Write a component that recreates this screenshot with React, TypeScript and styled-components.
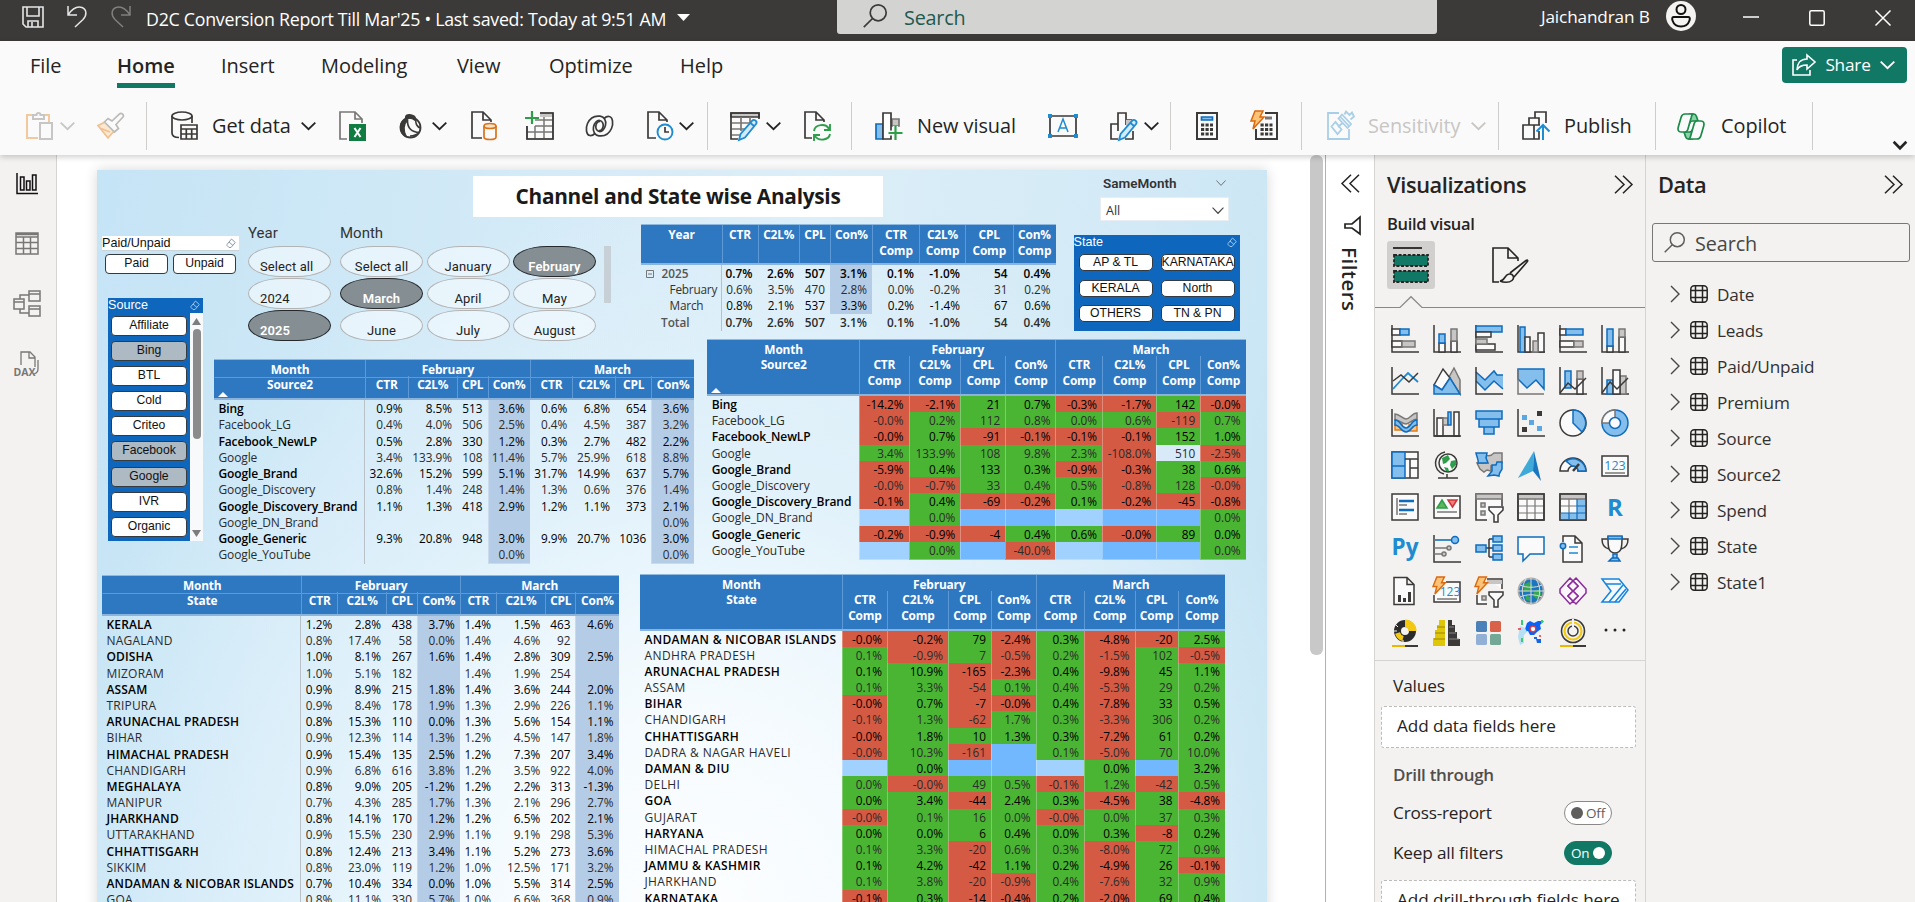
import React from "react";
import styled, { createGlobalStyle, css } from "styled-components";

const UI = '"Open Sans", "Noto Sans", sans-serif';
const DIN = 'Roboto, "Noto Sans", sans-serif';
const ARIAL = '"Liberation Sans", Arial, sans-serif';

const INK = "#3b3a39";
const BLUE = "#0f6cbd";
const SKY = "#83beec";
const GREY = "#797775";
const SILVER = "#c8c6c4";
const PAPER = "#fafafa";
const CYAN = "#1f8bd0";
const TEAL = "#117865";
const GREEN = "#2e9e4b";

const Global = createGlobalStyle`
  *, *::before, *::after { box-sizing: border-box; }
  html, body { margin: 0; padding: 0; }
  body { font-family: ${UI}; color: #252423; background: #fff; overflow: hidden; }
  svg { display: block; flex: none; overflow: visible; }
`;

/* ---------- shell ---------- */

const Shell = styled.div`
  width: 1915px;
  height: 902px;
  display: flex;
  flex-direction: column;
  overflow: hidden;
`;

const TitleBar = styled.header`
  height: 41px;
  flex: none;
  display: flex;
  align-items: flex-start;
  background: #3b3a38;
  color: #fff;
`;

const TitleIcon = styled.div<{ $ml: number; $mt: number; $dim?: boolean }>`
  margin: ${(p) => p.$mt}px 0 0 ${(p) => p.$ml}px;
  opacity: ${(p) => (p.$dim ? 0.4 : 1)};
`;

const DocName = styled.div`
  width: 531px;
  margin-left: 15px;
  padding-top: 6px;
  font-size: 17.8px;
  line-height: 27px;
  letter-spacing: -0.27px;
  white-space: nowrap;
`;

const TopSearch = styled.div`
  width: 600px;
  height: 34px;
  margin-left: 147px;
  padding: 0 0 0 26px;
  display: flex;
  align-items: flex-start;
  background: #d3d3d1;
  border-radius: 0 0 3px 3px;
  color: #1e5a4e;
  font-size: 19.8px;
  line-height: 35px;
  letter-spacing: -0.2px;
`;

const TopSearchText = styled.span`
  margin-left: 17px;
`;

const UserName = styled.div`
  width: 125px;
  margin-left: 104px;
  font-size: 17.2px;
  line-height: 34px;
  letter-spacing: -0.15px;
  white-space: nowrap;
`;

const Ribbon = styled.div`
  height: 114px;
  flex: none;
  position: relative;
  z-index: 2;
  background: ${PAPER};
  box-shadow: 0 2px 6px rgba(0, 0, 0, 0.2);
`;

const TabRow = styled.nav`
  height: 60px;
  padding: 6px 8px 0 30px;
  display: flex;
`;

const Tab = styled.div<{ $w: number; $active?: boolean }>`
  width: ${(p) => p.$w}px;
  font-size: 20px;
  line-height: 38px;
  letter-spacing: -0.05px;
  font-weight: ${(p) => (p.$active ? 600 : 400)};
`;

const TabLabel = styled.span<{ $active?: boolean }>`
  display: inline-block;
  height: 41px;
  border-bottom: ${(p) => (p.$active ? `5px solid ${TEAL}` : "0")};
`;

const ShareButton = styled.div`
  width: 125px;
  height: 36px;
  margin-left: auto;
  padding: 0 12px 0 10px;
  display: flex;
  align-items: center;
  justify-content: space-between;
  border-radius: 4px;
  background: ${TEAL};
  color: #fff;
  font-size: 17.2px;
  letter-spacing: -0.2px;
  line-height: 36px;
`;

const ToolRow = styled.div`
  height: 50px;
  display: flex;
  align-items: center;
`;

const Tool = styled.div<{ $ml: number; $w?: number }>`
  width: ${(p) => p.$w ?? 28}px;
  margin-left: ${(p) => p.$ml}px;
  flex: none;
  display: flex;
  align-items: center;
`;

const ToolLabel = styled.div<{ $ml: number; $w: number; $off?: boolean }>`
  width: ${(p) => p.$w}px;
  margin-left: ${(p) => p.$ml}px;
  flex: none;
  font-size: 19.9px;
  line-height: 52px;
  letter-spacing: -0.05px;
  white-space: nowrap;
  color: ${(p) => (p.$off ? "#c8c6c4" : "#252423")};
`;

const Divider = styled.div<{ $ml: number }>`
  width: 1px;
  height: 48px;
  margin-left: ${(p) => p.$ml}px;
  flex: none;
  background: #cfcdcb;
`;

const Collapse = styled.div`
  align-self: flex-end;
  margin: 0 8px 2px auto;
`;

const Workspace = styled.div`
  flex: 1;
  min-height: 0;
  display: flex;
`;

const Rail = styled.aside`
  width: 57px;
  flex: none;
  padding-top: 15px;
  display: flex;
  flex-direction: column;
  align-items: center;
  gap: 33px;
  padding-right: 2px;
  background: #f3f2f1;
  border-right: 1px solid #d6d4d2;
`;

const RailItem = styled.div`
  height: 27px;
  display: flex;
  align-items: center;
`;

const CanvasArea = styled.main`
  width: 1268px;
  flex: none;
  padding-left: 40px;
  display: flex;
  background: #fff;
`;

const PageScroll = styled.div`
  width: 13px;
  height: 500px;
  margin-left: 43px;
  border-radius: 6px;
  background: #c8c8c8;
`;

/* ---------- report page ---------- */

const Page = styled.section`
  width: 1170px;
  height: 760px;
  margin-top: 15px;
  flex: none;
  box-shadow: 0 0 12px rgba(0, 0, 0, 0.16);
  background:
    radial-gradient(ellipse 660px 740px at 600px 760px, #fdfeff 0%, #f3fafe 35%, rgba(226, 242, 251, 0.85) 62%, rgba(205, 232, 246, 0) 100%),
    linear-gradient(100deg, #c5e4f5 0%, #d3eaf7 32%, #dceef8 55%, #d3eaf6 80%, #c5e3f3 100%);
`;

const PageHead = styled.div`
  height: 54px;
  padding: 6px 0 0 376px;
  display: flex;
`;

const PageTitle = styled.h1`
  width: 410px;
  height: 41px;
  margin: 0;
  background: #fff;
  text-align: center;
  font-size: 20.8px;
  font-weight: 700;
  line-height: 40px;
  letter-spacing: -0.27px;
  white-space: nowrap;
  color: #1b1a19;
`;

const SameMonth = styled.div`
  width: 129px;
  margin-left: 217px;
`;

const SameMonthHead = styled.div`
  height: 21px;
  padding: 0 3px 7px 3px;
  display: flex;
  align-items: center;
  justify-content: space-between;
  font: 600 13.5px ${DIN};
  color: #333;
`;

const SameMonthBox = styled.div`
  height: 24px;
  padding: 2px 4px 0 5px;
  display: flex;
  align-items: center;
  justify-content: space-between;
  background: #fff;
  border: 1px solid #e9eef2;
  font-size: 12.5px;
  color: #333;
`;

const Upper = styled.div`
  height: 350px;
  display: flex;
`;

const SideColumn = styled.div`
  width: 117px;
  flex: none;
  padding: 12px 0 0 5px;
`;

const MainColumn = styled.div`
  flex: 1;
  min-width: 0;
`;

const FilterBand = styled.div`
  height: 115px;
  padding-left: 34px;
  display: flex;
  align-items: flex-start;
`;

const TableBand = styled.div`
  display: flex;
  align-items: flex-start;
`;

const Lower = styled.div`
  display: flex;
  align-items: flex-start;
  padding-left: 5px;
`;

const PaidSlicer = styled.div`
  width: 137px;
`;

const SlicerHead = styled.div<{ $blue?: boolean }>`
  height: 15px;
  padding-right: 3px;
  display: flex;
  align-items: center;
  justify-content: space-between;
  font: 12.6px/15px ${ARIAL};
  color: ${(p) => (p.$blue ? "#fff" : "#111")};
  background: ${(p) => (p.$blue ? "#0f67bd" : "#fff")};
  border-bottom: ${(p) => (p.$blue ? "0" : "1px solid #c9d3da")};
`;

const PaidButtons = styled.div`
  padding: 3px 3px 0;
  display: flex;
  gap: 5px;
`;

const Chip = styled.div<{ $h: number; $on?: boolean; $r?: number }>`
  height: ${(p) => p.$h}px;
  flex: 1;
  min-width: 0;
  border: 1px solid #333a40;
  border-radius: ${(p) => p.$r ?? 4}px;
  background: ${(p) => (p.$on ? "#adbac4" : "#fff")};
  font: 12.2px/${(p) => p.$h - 3}px ${ARIAL};
  color: #111;
  display: flex;
  justify-content: center;
  white-space: nowrap;
  overflow: hidden;
`;

const SourceSlicer = styled.div`
  width: 95px;
  height: 243px;
  margin: 24px 0 0 6px;
  background: #0f67bd;
`;

const SourceBody = styled.div`
  height: 228px;
  display: flex;
`;

const SourceList = styled.div`
  width: 82px;
  padding: 3px 3px 0;
  display: flex;
  flex-direction: column;
  gap: 5.1px;
  & > div { flex: none; }
`;

const SourceScroll = styled.div`
  width: 13px;
  padding: 5px 0 4px;
  display: flex;
  flex-direction: column;
  align-items: center;
  background: #f8f9fa;
`;

const Thumb = styled.div`
  width: 8px;
  height: 110px;
  margin: 4px 0 auto;
  border-radius: 4px;
  background: #8b8b8b;
`;

const TileSlicer = styled.div<{ $ml?: number; $w: number }>`
  width: ${(p) => p.$w}px;
  margin-left: ${(p) => p.$ml ?? 0}px;
  flex: none;
`;

const TileTitle = styled.div`
  height: 22px;
  font: 15px/18px ${DIN};
  color: #333;
`;

const TileGrid = styled.div<{ $n: number }>`
  display: grid;
  grid-template-columns: repeat(${(p) => p.$n}, 83px);
  grid-auto-rows: 31px;
  gap: 1px 3.5px;
`;

const Tile = styled.div<{ $on?: boolean; $left?: boolean }>`
  padding: 8px 0 0 ${(p) => (p.$left ? "11px" : "0")};
  border: 1px solid ${(p) => (p.$on ? "#25292c" : "#b3b3b3")};
  border-radius: 34px / 50%;
  background: ${(p) => (p.$on ? "#858e93" : "rgba(247, 252, 255, 0.6)")};
  color: ${(p) => (p.$on ? "#fff" : "#222")};
  font: ${(p) => (p.$on ? 600 : 400)} 13px/24px ${DIN};
  letter-spacing: 0.1px;
  text-align: ${(p) => (p.$left ? "left" : "center")};
  white-space: nowrap;
`;

const TileScroll = styled.div`
  width: 7px;
  height: 57px;
  margin: 22px 0 0 8px;
  flex: none;
  background: #c6d0d6;
`;

const StateSlicer = styled.div`
  width: 166px;
  height: 96px;
  margin: 11px 0 0 18px;
  background: #0f67bd;
`;

const StateGrid = styled.div`
  padding: 4px 5px 0;
  display: grid;
  grid-template-columns: 74px 74px;
  gap: 8.5px 8px;
`;

/* ---------- matrix visuals ---------- */

const Matrix = styled.div<{ $ml?: number; $mt?: number }>`
  margin: ${(p) => p.$mt ?? 0}px 0 0 ${(p) => p.$ml ?? 0}px;
  flex: none;
  font-size: 11.8px;
`;

const gridCols = css<{ $cols: number[] }>`
  display: grid;
  grid-template-columns: ${(p) => p.$cols.map((c) => `${c}px`).join(" ")};
`;

const HeadGrid = styled.div<{ $cols: number[]; $h: number; $grouped?: boolean }>`
  ${gridCols}
  height: ${(p) => p.$h}px;
  grid-template-rows: ${(p) => (p.$grouped ? "15.5px 1fr" : "1fr")};
  background: #2e78c2;
  border-top: 1px solid #8fb9df;
  border-bottom: 2px solid #8ab4dc;
  color: #fff;
  font-weight: 700;
  font-size: 11.9px;
  letter-spacing: -0.15px;
`;

const HeadTop = styled.div<{ $cols: number[] }>`
  ${gridCols}
  grid-column: 1 / -1;
`;

const HeadCell = styled.div<{ $span?: number; $line?: boolean; $under?: boolean }>`
  grid-column: span ${(p) => p.$span ?? 1};
  padding-top: 0.5px;
  display: flex;
  flex-direction: column;
  text-align: center;
  line-height: 16.3px;
  white-space: pre;
  border-left: 1px solid ${(p) => (p.$line ? "#5c99d6" : "transparent")};
  border-bottom: ${(p) => (p.$under ? "1px solid #5c99d6" : "0")};
`;

const SortMark = styled.div`
  width: 0;
  height: 0;
  margin: auto 0 1px 3px;
  border: 5px solid transparent;
  border-top-width: 0;
  border-bottom-color: #fff;
`;

const BodyRow = styled.div<{ $cols: number[]; $h: number; $even: boolean }>`
  ${gridCols}
  height: ${(p) => p.$h}px;
  line-height: ${(p) => p.$h + 0.8}px;
  color: ${(p) => (p.$even ? "#2b2b2b" : "#000")};
`;

const RowLabel = styled.div<{ $strong: boolean; $ls: number; $rule?: boolean }>`
  padding-left: 4.5px;
  font-size: 12px;
  font-weight: ${(p) => (p.$strong ? 600 : 400)};
  letter-spacing: ${(p) => p.$ls}px;
  white-space: nowrap;
  border-right: ${(p) => (p.$rule ? "1px solid #b9c0c6" : "0")};
`;

const Value = styled.div<{ $bg?: string; $bold?: boolean; $edge?: string }>`
  padding-right: 5px;
  text-align: right;
  white-space: nowrap;
  font-weight: ${(p) => (p.$bold ? 600 : 400)};
  background: ${(p) => p.$bg ?? "transparent"};
  border: 0 solid ${(p) => p.$edge ?? "transparent"};
  border-width: ${(p) => (p.$edge ? "0 0 1px 1px" : "0")};
`;

const YearLabel = styled.div<{ $indent: number; $strong?: boolean }>`
  padding-left: ${(p) => p.$indent}px;
  display: flex;
  align-items: center;
  gap: 8px;
  font-weight: ${(p) => (p.$strong ? 600 : 400)};
  font-size: 11.8px;
  letter-spacing: ${(p) => (p.$strong ? 0 : -0.2)}px;
  color: ${(p) => (p.$strong ? "#555" : "#333")};
  border-right: 1px solid #b9c0c6;
`;

type Row = [string, string];

const METRICS = ["CTR", "C2L%", "CPL", "Con%"];
const COMPS = METRICS.map((m) => `${m}\nComp`);

const sourceRows: Row[] = [
  ["Bing", "0.9%|8.5%|513|3.6%|0.6%|6.8%|654|3.6%"],
  ["Facebook_LG", "0.4%|4.0%|506|2.5%|0.4%|4.5%|387|3.2%"],
  ["Facebook_NewLP", "0.5%|2.8%|330|1.2%|0.3%|2.7%|482|2.2%"],
  ["Google", "3.4%|133.9%|108|11.4%|5.7%|25.9%|618|8.8%"],
  ["Google_Brand", "32.6%|15.2%|599|5.1%|31.7%|14.9%|637|5.7%"],
  ["Google_Discovery", "0.8%|1.4%|248|1.4%|1.3%|0.6%|376|1.4%"],
  ["Google_Discovery_Brand", "1.1%|1.3%|418|2.9%|1.2%|1.1%|373|2.1%"],
  ["Google_DN_Brand", "|||||||0.0%"],
  ["Google_Generic", "9.3%|20.8%|948|3.0%|9.9%|20.7%|1036|3.0%"],
  ["Google_YouTube", "|||0.0%||||0.0%"],
];

const sourceCompRows: Row[] = [
  ["Bing", "-14.2%|-2.1%|21|0.7%|-0.3%|-1.7%|142|-0.0%"],
  ["Facebook_LG", "-0.0%|0.2%|112|0.8%|0.0%|0.6%|-119|0.7%"],
  ["Facebook_NewLP", "-0.0%|0.7%|-91|-0.1%|-0.1%|-0.1%|152|1.0%"],
  ["Google", "3.4%|133.9%|108|9.8%|2.3%|-108.0%|510|-2.5%"],
  ["Google_Brand", "-5.9%|0.4%|133|0.3%|-0.9%|-0.3%|38|0.6%"],
  ["Google_Discovery", "-0.0%|-0.7%|33|0.4%|0.5%|-0.8%|128|-0.0%"],
  ["Google_Discovery_Brand", "-0.1%|0.4%|-69|-0.2%|0.1%|-0.2%|-45|-0.8%"],
  ["Google_DN_Brand", "|0.0%||||||0.0%"],
  ["Google_Generic", "-0.2%|-0.9%|-4|0.4%|0.6%|-0.0%|89|0.0%"],
  ["Google_YouTube", "|0.0%||-40.0%||||0.0%"],
];

const stateRows: Row[] = [
  ["KERALA", "1.2%|2.8%|438|3.7%|1.4%|1.5%|463|4.6%"],
  ["NAGALAND", "0.8%|17.4%|58|0.0%|1.4%|4.6%|92|"],
  ["ODISHA", "1.0%|8.1%|267|1.6%|1.4%|2.8%|309|2.5%"],
  ["MIZORAM", "1.0%|5.1%|182||1.4%|1.9%|254|"],
  ["ASSAM", "0.9%|8.9%|215|1.8%|1.4%|3.6%|244|2.0%"],
  ["TRIPURA", "0.9%|8.4%|178|1.9%|1.3%|2.9%|226|1.1%"],
  ["ARUNACHAL PRADESH", "0.8%|15.3%|110|0.0%|1.3%|5.6%|154|1.1%"],
  ["BIHAR", "0.9%|12.3%|114|1.3%|1.2%|4.5%|147|1.8%"],
  ["HIMACHAL PRADESH", "0.9%|15.4%|135|2.5%|1.2%|7.3%|207|3.4%"],
  ["CHANDIGARH", "0.9%|6.8%|616|3.8%|1.2%|3.5%|922|4.0%"],
  ["MEGHALAYA", "0.8%|9.0%|205|-1.2%|1.2%|2.2%|313|-1.3%"],
  ["MANIPUR", "0.7%|4.3%|285|1.7%|1.3%|2.1%|296|2.7%"],
  ["JHARKHAND", "0.8%|14.1%|170|1.2%|1.2%|6.5%|202|2.1%"],
  ["UTTARAKHAND", "0.9%|15.5%|230|2.9%|1.1%|9.1%|298|5.3%"],
  ["CHHATTISGARH", "0.8%|12.4%|213|3.4%|1.1%|5.2%|273|3.6%"],
  ["SIKKIM", "0.8%|23.0%|119|1.2%|1.0%|12.5%|171|3.2%"],
  ["ANDAMAN & NICOBAR ISLANDS", "0.7%|10.4%|334|0.0%|1.0%|5.5%|314|2.5%"],
  ["GOA", "0.8%|11.1%|330|5.7%|1.0%|6.6%|368|0.9%"],
];

const stateCompRows: Row[] = [
  ["ANDAMAN & NICOBAR ISLANDS", "-0.0%|-0.2%|79|-2.4%|0.3%|-4.8%|-20|2.5%"],
  ["ANDHRA PRADESH", "0.1%|-0.9%|7|-0.5%|0.2%|-1.5%|102|-0.5%"],
  ["ARUNACHAL PRADESH", "0.1%|10.9%|-165|-2.3%|0.4%|-9.8%|45|1.1%"],
  ["ASSAM", "0.1%|3.3%|-54|0.1%|0.4%|-5.3%|29|0.2%"],
  ["BIHAR", "-0.0%|0.7%|-7|-0.0%|0.4%|-7.8%|33|0.5%"],
  ["CHANDIGARH", "-0.1%|1.3%|-62|1.7%|0.3%|-3.3%|306|0.2%"],
  ["CHHATTISGARH", "-0.0%|1.8%|10|1.3%|0.3%|-7.2%|61|0.2%"],
  ["DADRA & NAGAR HAVELI", "-0.0%|10.3%|-161||0.1%|-5.0%|70|10.0%"],
  ["DAMAN & DIU", "|0.0%||||0.0%||3.2%"],
  ["DELHI", "0.0%|-0.0%|49|0.5%|-0.1%|1.2%|-42|0.5%"],
  ["GOA", "0.0%|3.4%|-44|2.4%|0.3%|-4.5%|38|-4.8%"],
  ["GUJARAT", "-0.0%|0.1%|16|0.0%|-0.0%|0.0%|37|0.3%"],
  ["HARYANA", "0.0%|0.0%|6|0.4%|0.0%|0.3%|-8|0.2%"],
  ["HIMACHAL PRADESH", "0.1%|3.3%|-20|0.6%|0.3%|-8.0%|72|0.9%"],
  ["JAMMU & KASHMIR", "0.1%|4.2%|-42|1.1%|0.2%|-4.9%|26|-0.1%"],
  ["JHARKHAND", "0.1%|3.8%|-20|-0.9%|0.4%|-7.6%|32|0.9%"],
  ["KARNATAKA", "-0.1%|0.3%|-14|-0.4%|0.2%|-2.0%|69|0.4%"],
];

const CON_BG = "#b5cce7";

function compColor(v: string, col: number) {
  if (v === "510") return "#d8eaf8";
  if (v === "") return col % 4 === 0 ? "#a1d1ff" : "#72b8ff";
  return v.startsWith("-") ? "#d45a43" : "#4ab532";
}

type MatrixProps = {
  cols: number[];
  headHeight: number;
  rowHeight?: number;
  field: string;
  rows: Row[];
  comp?: boolean;
  sorted?: boolean;
  ml?: number;
  mt?: number;
  boldLs?: number;
  plainLs?: number;
};

function MatrixVisual(p: MatrixProps) {
  const names = p.comp ? COMPS : METRICS;
  const h = p.rowHeight ?? 16.2;
  return (
    <Matrix $ml={p.ml} $mt={p.mt}>
      <HeadGrid $cols={p.cols} $h={p.headHeight} $grouped>
        <HeadTop $cols={p.cols}>
          <HeadCell $under={!p.comp}>Month</HeadCell>
          <HeadCell $span={4} $line $under={!p.comp}>February</HeadCell>
          <HeadCell $span={4} $line $under={!p.comp}>March</HeadCell>
        </HeadTop>
        <HeadCell>
          {p.field}
          {p.sorted && <SortMark />}
        </HeadCell>
        {[...names, ...names].map((n, i) => (
          <HeadCell key={i} $line>{n}</HeadCell>
        ))}
      </HeadGrid>
      {p.rows.map(([label, data], r) => (
        <BodyRow key={label} $cols={p.cols} $h={h} $even={r % 2 === 1}>
          <RowLabel
            $strong={r % 2 === 0}
            $ls={(r % 2 === 0 ? p.boldLs : p.plainLs) ?? -0.13}
            $rule={!p.comp}
          >
            {label}
          </RowLabel>
          {data.split("|").map((v, c) => (
            <Value
              key={c}
              $bg={p.comp ? compColor(v, c) : c % 4 === 3 ? CON_BG : undefined}
              $edge={p.comp ? "rgba(255,255,255,.3)" : c % 4 === 3 ? "rgba(255,255,255,.28)" : undefined}
            >
              {v}
            </Value>
          ))}
        </BodyRow>
      ))}
    </Matrix>
  );
}

const YEAR_COLS = [81, 36, 41.5, 31, 42, 47, 46, 47.5, 43];
const yearRows: { label: string; data: string; total?: boolean; box?: boolean; indent: number }[] = [
  { label: "2025", data: "0.7%|2.6%|507|3.1%|0.1%|-1.0%|54|0.4%", total: true, box: true, indent: 5 },
  { label: "February", data: "0.6%|3.5%|470|2.8%|0.0%|-0.2%|31|0.2%", indent: 29 },
  { label: "March", data: "0.8%|2.1%|537|3.3%|0.2%|-1.4%|67|0.6%", indent: 29 },
  { label: "Total", data: "0.7%|2.6%|507|3.1%|0.1%|-1.0%|54|0.4%", total: true, indent: 20.5 },
];

function YearMatrix() {
  return (
    <Matrix $ml={29.5}>
      <HeadGrid $cols={YEAR_COLS} $h={41}>
        <HeadCell>Year</HeadCell>
        {[...METRICS, ...COMPS].map((n) => (
          <HeadCell key={n} $line>{n}</HeadCell>
        ))}
      </HeadGrid>
      {yearRows.map((row, r) => (
        <BodyRow key={row.label} $cols={YEAR_COLS} $h={16.2} $even={r % 2 === 1}>
          <YearLabel $indent={row.indent} $strong={row.total}>
            {row.box && (
              <svg width="8" height="8" viewBox="0 0 8 8" fill="none" stroke="#777">
                <path d="M.5.5h7v7h-7zM2 4h4" />
              </svg>
            )}
            {row.label}
          </YearLabel>
          {row.data.split("|").map((v, c) => (
            <Value key={c} $bold={row.total} $bg={c === 3 && r < 3 ? CON_BG : undefined}>{v}</Value>
          ))}
        </BodyRow>
      ))}
    </Matrix>
  );
}

/* ---------- small drawings ---------- */

const Chevron = ({ w = 15, h = 8, color = "#252423", sw = 1.8 }) => (
  <svg width={w} height={h} viewBox="0 0 15 8" preserveAspectRatio="none" fill="none" stroke={color} strokeWidth={sw}>
    <path d="M.7.7 7.5 7.2 14.3.7" />
  </svg>
);

const Double = ({ left }: { left?: boolean }) => (
  <svg width="19" height="19" viewBox="0 0 19 19" fill="none" stroke="#252423" strokeWidth="1.5">
    <path d={left ? "M10 .7 1 9.5l9 8.8M18 .7 9 9.5l9 8.8" : "M1 .7l9 8.8-9 8.8M9 .7l9 8.8-9 8.8"} />
  </svg>
);

const Magnifier = ({ size = 24, color = "#3b3a39" }) => (
  <svg width={size} height={size} viewBox="0 0 24 24" fill="none" stroke={color} strokeWidth="1.7">
    <circle cx="15.2" cy="8.8" r="8" />
    <path d="M9.5 14.5.8 23.2" />
  </svg>
);

const Eraser = ({ color = "#8a9aa6" }) => (
  <svg width="10" height="11" viewBox="0 0 10 11" fill="none" stroke={color} strokeWidth="1">
    <path d="M1 6.500 5.500 1 9.300 4.500 5 9.500H3L1 7.500zM3 4l4 3.500" />
  </svg>
);

const ToolSvg = ({ children, w = 28, h = 30 }: { children: React.ReactNode; w?: number; h?: number }) => (
  <svg width={w} height={h} viewBox={`0 0 ${w} ${h}`} fill="none" stroke={INK} strokeWidth="1.7">
    {children}
  </svg>
);

const Pencil = () => (
  <path d="M9 29l1.6-6L22 9.8a2.6 2.6 0 0 1 4.2 3L15 26.500zM20.500 12l3.500 3" fill="#d5ebfa" stroke={CYAN} strokeWidth="1.8" />
);

const Bolt = ({ s = 1 }) => (
  <path transform={`scale(${s})`} d="M4 0h8L9 6h4L2 18l2-8H0z" fill="#fcc378" stroke="#d9690f" strokeWidth="1.5" />
);

const I = {
  paste: (
    <ToolSvg>
      <g strokeWidth="2">
        <path d="M8 4H1v23h11M18 4h5v7" stroke="#f2c99c" />
        <path d="M7 8V4h3.500a2 2 0 0 1 4 0H18v4zM14 12h12v16H14z" stroke="#c8c6c4" />
      </g>
    </ToolSvg>
  ),
  brush: (
    <ToolSvg w={28} h={26}>
      <path d="M1 12.500 8 9l9 9-6 7z" fill="#fce7cf" stroke="#f0c091" />
      <path d="M4 15.500l9 3.500" stroke="#f0c091" />
      <path d="M7.500 9 11 5.500l4 2.500L22.500 1c2-1.500 5 1 3.500 3L19 11.500l2.500 4-4 3.500z" stroke="#bcbab8" fill={PAPER} />
    </ToolSvg>
  ),
  getData: (
    <ToolSvg>
      <ellipse cx="11" cy="5" rx="10" ry="4" />
      <path d="M1 5v17c0 3 3 4.500 7 4.500M21 5v7M10 14h16v14H10zM10 18h16M10 23h16M15.300 18v10M20.700 18v10" />
    </ToolSvg>
  ),
  excel: (
    <ToolSvg>
      <path d="M8 28H1V1h15l7 7v4M16 1v7h7" stroke={GREY} />
      <path d="M10 13h17v17H10z" fill="#107c41" stroke="none" />
      <path d="M15.500 17l6 9M21.500 17l-6 9" stroke="#fff" strokeWidth="2" />
    </ToolSvg>
  ),
  lake: (
    <ToolSvg w={25} h={25}>
      <circle cx="12.500" cy="13.500" r="10" strokeWidth="1.800" />
      <path d="M8 4.500C7 1 10 .500 13 1c3 .500 5 2 4 5C14 3.500 11 3.500 8 4.500z" fill={INK} />
      <path d="M8 5C2 7 0 17 8 22.500 5 17 5 10 9.500 6z" fill={INK} />
      <path d="M9.500 7c0 6 3 11 12 11.500M18 6c-1 3 1 7 4.500 8M12 22c4 0 7-1.500 9.500-4" strokeWidth="1.600" />
    </ToolSvg>
  ),
  sql: (
    <ToolSvg>
      <path d="M11 27H1V1h11l8 8v2M12 1v8h8" />
      <path d="M13 15v11c0 1.500 2.500 2.500 6 2.500s6-1 6-2.500V15" stroke="#d9731a" fill={PAPER} />
      <ellipse cx="19" cy="15" rx="6" ry="2.500" stroke="#d9731a" fill="#fbe2c8" />
    </ToolSvg>
  ),
  enter: (
    <ToolSvg w={30} h={30}>
      <path d="M15 2h13v4H15z" fill={SILVER} stroke="none" />
      <path d="M15 2h13v26H2V15M10 15h18M2 21h26M10 9h18M10 15v13M19 6v22" stroke={GREY} strokeWidth="1.500" />
      <path d="M15 2h13v26H2V15" />
      <path d="M7 0v13M0 7h14" stroke={GREEN} strokeWidth="2.200" />
    </ToolSvg>
  ),
  verse: (
    <ToolSvg w={29} h={22}>
      <path d="M5 20.500C1 20 .500 13 2.500 8.500 5 3 10 .500 15 1.200c4 .600 6.500 4 5.500 9-.800 3.800-3.500 6.800-6.300 6.300-2.700-.500-4-3.500-3.200-6.500.600-2.500 2.500-4 4.300-3.500" />
      <path d="M24 1.500c4 .500 4.500 7.500 2.500 12C24 19 19 21.500 14 20.800c-4-.600-6.500-4-5.500-9 .800-3.800 3.500-6.800 6.300-6.300 2.700.500 4 3.500 3.200 6.500-.600 2.500-2.500 4-4.300 3.500" />
      <path d="M5 20.500c2 .300 3.500-.700 5-2M24 1.500c-2-.300-3.500.700-5 2" />
    </ToolSvg>
  ),
  recent: (
    <ToolSvg>
      <path d="M9 27H1V1h11l8 8v2M12 1v8h8" />
      <circle cx="18" cy="21" r="7.500" stroke={CYAN} strokeWidth="1.900" fill={PAPER} />
      <path d="M18 16v5h4" />
    </ToolSvg>
  ),
  transform: (
    <ToolSvg w={30}>
      <path d="M1 2h28v4H1z" fill={SILVER} />
      <path d="M2 12h22M2 18h16M2 24h9M11 6v14M20 6v8" stroke={GREY} />
      <path d="M8 28H1V2h28v6" />
      <Pencil />
    </ToolSvg>
  ),
  refresh: (
    <ToolSvg>
      <path d="M8 27H1V1h11l8 8v2M12 1v8h8" />
      <path d="M10 20c1-7 12-8 15-2M26 13v6h-6M26 23c-1 6-11 8-15 2M10 30v-6h6" stroke={GREEN} strokeWidth="1.900" />
    </ToolSvg>
  ),
  newVisual: (
    <ToolSvg>
      <path d="M1 13h7v15H1z" fill={SKY} stroke={BLUE} />
      <path d="M17 8h7v7h-7z" fill={SILVER} stroke={GREY} />
      <path d="M8 2h8v26H8z" fill="#fff" />
      <path d="M20.500 15v14M13.500 22h14" stroke={PAPER} strokeWidth="5" />
      <path d="M20.500 15v14M13.500 22h14" stroke={GREEN} strokeWidth="2.200" />
    </ToolSvg>
  ),
  textBox: (
    <ToolSvg w={30} h={24}>
      <path d="M2 2h26v20H2z" />
      <path d="M0 0h4v4H0zM26 0h4v4h-4zM0 20h4v4H0zM26 20h4v4h-4z" fill={CYAN} stroke="none" />
      <path d="M10 18 15 5l5 13M12 14h6" stroke={CYAN} strokeWidth="1.500" />
    </ToolSvg>
  ),
  moreVisual: (
    <ToolSvg>
      <path d="M8 28H1V13h7M8 20V2h8v12M17 9h5M23 20v8h-8" />
      <path d="M16 9h6v6h-6z" fill={SILVER} stroke="none" />
      <Pencil />
    </ToolSvg>
  ),
  calc: (
    <ToolSvg w={22}>
      <path d="M1 2h20v26H1z" strokeWidth="2" />
      <path d="M5.500 6h11v3h-11z" fill={SKY} stroke={BLUE} />
      <path d="M5 14h12M5 18.500h12M5 23h12" strokeWidth="3" strokeDasharray="3.200 1.300" />
    </ToolSvg>
  ),
  quick: (
    <ToolSvg>
      <path d="M14 2h12v26H5V18" strokeWidth="2" />
      <path d="M14 7h7" stroke={GREY} strokeWidth="3" />
      <path d="M9.500 14h12M9.500 18.500h12M9.500 23h12" strokeWidth="3" strokeDasharray="3.200 1.300" />
      <Bolt />
    </ToolSvg>
  ),
  sensitivity: (
    <ToolSvg>
      <g stroke="#a9cfe8" strokeWidth="1.800">
        <path d="M12 2H1v26h21V18" />
        <path d="M4.500 15.500 8.500 11l6 7.500-4 4.500zM11.500 7.500l3.500-4 9 9.500-3.500 4zM17.500 3.500l1.500-3 3.500 3.500L25 1.500l2 4-3.500 3M13 5.500l9.500 10M15.500 12l-4.500 4" />
      </g>
    </ToolSvg>
  ),
  publish: (
    <ToolSvg>
      <path d="M1 14h11v14H1zM7 14V7h10v7M13 7V1h11v11M12 14h6M12 28h5v-8" />
      <path d="M21 29V15M14.500 20.500 21 14l6.500 6.500" stroke={CYAN} strokeWidth="2" />
    </ToolSvg>
  ),
  copilot: (
    <ToolSvg w={28} h={27}>
      <g stroke="#1a8a48" strokeLinejoin="round">
        <path d="M12.500 1H17c1.500 0 2 1 2.500 2.500L21 8h-5.500c-1.500 0-2.300.700-2.800 2z" fill="#8fcfa5" />
        <path d="M15.500 26H11c-1.500 0-2-1-2.500-2.500L7 19h5.500c1.500 0 2.300-.700 2.800-2z" fill="#8fcfa5" />
        <path d="M15 1H8C6 1 4.800 2 4.200 4L1.300 14c-.900 3 .200 5 2.700 5h4c1.500 0 2.300-1 2.800-2.500l3.400-12C14.500 3 15 1.500 16 1z" fill={PAPER} />
        <path d="M13 26h7c2 0 3.200-1 3.800-3l2.900-10c.900-3-.200-5-2.700-5h-4c-1.500 0-2.300 1-2.800 2.500l-3.400 12c-.300 1.500-.800 3-1.800 3.500z" fill={PAPER} />
      </g>
    </ToolSvg>
  ),
};

/* ---------- visualization gallery ---------- */

const axis = <path d="M1 0v27h27" />;
const b = { fill: SKY, stroke: BLUE };
const g = { fill: SILVER, stroke: GREY };
const w = { fill: PAPER };
const glyph = { fontFamily: UI, stroke: "none", fill: CYAN } as const;

const gallery: React.ReactNode[] = [
  <>{axis}<path d="M1 4h8v6H1zM1 16h10v6H1z" {...w} /><path d="M9 4h9v6H9z" {...b} /><path d="M11 16h13v6H11z" {...g} /></>,
  <>{axis}<path d="M6 18h6v9H6zM18 16h6v11h-6z" {...w} /><path d="M6 9h6v9H6z" {...b} /><path d="M18 4h6v12h-6z" {...g} /></>,
  <>{axis}<path d="M1 1h26v6H1z" {...b} /><path d="M1 7h15v5H1zM1 19h19v6H1z" {...w} /><path d="M1 14h11v5H1z" {...g} /></>,
  <>{axis}<path d="M3 2h5v25H3z" {...b} /><path d="M8 12h5v15H8zM21 8h6v19h-6z" {...w} /><path d="M16 16h5v11h-5z" {...g} /></>,
  <>{axis}<path d="M1 4h6v6H1zM1 16h14v6H1z" {...w} /><path d="M7 4h17v6H7z" {...b} /><path d="M15 16h9v6h-9z" {...g} /></>,
  <>{axis}<path d="M6 21h6v6H6zM18 12h6v15h-6z" {...w} /><path d="M6 4h6v17H6z" {...b} /><path d="M18 4h6v8h-6z" {...g} /></>,
  <>{axis}<path d="M2 22 12 11l5-5 10 9" stroke={CYAN} fill="none" strokeWidth="1.800" /><path d="M2 14l8-6 8 7 9-9" fill="none" /></>,
  <><path d="M16 10 21 1l6 12v14z" {...g} /><path d="M1 18 10 2l7 9-8 12z" {...w} /><path d="M1 18l8 5 8-12 10 16H1z" {...b} /></>,
  <><path d="M1 5l9 8 9-9 3 4h6v14l-9-8-9 9-9-9z" fill={SKY} stroke="none" /><path d="M1 5l9 8 9-9 3 4h6M1 14l9 9 9-9 9 8" fill="none" stroke={BLUE} />{axis}</>,
  <><path d="M1 2h26v20l-8-9-9 8-9-9z" {...b} /><path d="M1 2v25h26" stroke={GREY} fill="none" /></>,
  <>{axis}<path d="M18 12h6v15h-6z" {...w} /><path d="M6 4h6v17H6z" {...b} /><path d="M18 4h6v8h-6z" {...g} /><path d="M1 26 9 16l7 6L27 11" fill="none" /></>,
  <>{axis}<path d="M6 13h6v14H6z" {...b} /><path d="M19 9h6v18h-6z" {...g} /><path d="M12 3h7v24h-7z" {...w} /><path d="M1 26 9 15l7 7L27 11" fill="none" /></>,
  <>{axis}<path d="M4 15h7v6H4zM18 16h8v6h-8z" fill="#fcc378" stroke="#e07b1c" /><path d="M4 5c5 0 7 5 11 5s6-6 11-6v6c-5 0-7 5-11 5S9 11 4 11z" {...g} /><path d="M4 11c6 0 6 8 11 8s5-8 11-8v5c-5 0-6 7-11 7S9 16 4 16z" {...b} /></>,
  <>{axis}<path d="M4 9h6v18H4zM21 3h5v24h-5z" {...w} /><path d="M10 9h5v7h-5z" {...g} /><path d="M15 3h3v13h-3z" {...b} /><path d="M1 27h26" /></>,
  <><path d="M1 2h26v8H1zM4 10h20v8H4zM9 18h10v7H9z" {...b} /></>,
  <>{axis}<g stroke="none"><path d="M20 2h5v5h-5zM5 18h5v5H5z" fill={INK} /><path d="M5 6h5v5H5zM12 11h5v5h-5zM20 17h5v5h-5z" fill="#5ba7e3" /></g></>,
  <><circle cx="14" cy="14" r="13" {...w} /><path d="M14 1a13 13 0 0 1 9 22l-9-9z" {...b} /></>,
  <><circle cx="14" cy="14" r="13" {...b} /><path d="M14 1A13 13 0 0 0 1 14h8a5 5 0 0 1 5-5z" fill={PAPER} stroke={GREY} /><circle cx="14" cy="14" r="5.500" fill={PAPER} stroke={BLUE} /></>,
  <><path d="M1 1h26v26H1z" {...w} /><path d="M1 1h13v26H1z" {...b} /><path d="M14 8h13M19 8v19M19 17h8" /><path d="M1 15h13" stroke={BLUE} /></>,
  <><circle cx="15" cy="12" r="9" {...w} /><path d="M9 7l6-3 2 4-4 4-3 1zM18 10l5-1v5l-4 4-2-4zM11 16l4 1 1 3-3 0z" fill={GREEN} stroke="none" /><path d="M12 1C0 3-1 20 11 23M14 23v4M5 27h20" fill="none" /></>,
  <><path d="M11 4c3 2 6 0 8-2h8v10c-3 1-5 0-7 3l-4 0v5l-4-1-3 2-4-3-3-6h9z" {...g} /><path d="M1 2h11l-1 5 2 5H3c1-3-1-5-2-10z" {...b} /><path d="M17 14h4l1-3h5v7c-1 3-3 3-3 7l-5-1-6 1 4-5z" {...b} /></>,
  <><g stroke="none"><path d="M17 0 1 27l15-7z" fill="#3fa9d8" /><path d="M17 0l7 30-8-10z" fill="#1b76c0" /></g></>,
  <><path d="M1 20a13 13 0 0 1 26 0h-8a5 5 0 0 0-10 0z" {...w} /><path d="M7 10a13 13 0 0 1 20 10h-8a5 5 0 0 0-6-5z" {...b} /><path d="M14 20l6-7" strokeWidth="2.500" /></>,
  <><path d="M1 5h26v20H1z" {...w} /><path d="M4 22h20" stroke={GREY} /><text x="14" y="19" textAnchor="middle" fontSize="12.500" {...glyph}>123</text></>,
  <><path d="M1 1h26v26H1z" {...w} /><path d="M6 5v17M8 12h8M8 21h8" stroke={GREY} /><path d="M8 8h15M8 17h15" stroke={BLUE} strokeWidth="2.500" /></>,
  <><path d="M1 3h26v22H1z" {...w} /><path d="M4 15l5-8 5 8z" fill="#5cb85c" stroke={GREEN} /><path d="M15 7h9l-4.500 7z" fill="#f08080" stroke="#d13438" /><path d="M4 19h20" stroke={GREY} /></>,
  <><path d="M12 27H1V1h26v12" {...w} /><path d="M1 1h26v5H1z" {...g} /><path d="M6 10h4v4H6zM6 18h4v4H6z" {...g} /><path d="M14 14h14v3l-5 5v7h-4v-7l-5-5z" {...w} /></>,
  <><path d="M1 1h26v26H1z" {...w} /><path d="M1 1h26v5H1z" {...g} /><path d="M2 13h24M2 20h24M10 6v20M18 6v20" stroke={GREY} strokeWidth="1.200" /><path d="M1 1h26v26H1z" fill="none" /></>,
  <><path d="M1 1h26v26H1z" {...w} /><path d="M18 6h9v21H1v-7h17z" fill={SKY} stroke="none" /><path d="M1 1h26v5H1z" {...g} /><path d="M2 13h16M10 6v14" stroke={GREY} strokeWidth="1.200" /><path d="M18 13h9M2 20h25M10 20v6M18 6v20" stroke={BLUE} strokeWidth="1.200" /><path d="M1 1h26v26H1z" fill="none" /></>,
  <><text x="14" y="23" textAnchor="middle" fontSize="24" fontWeight="700" {...glyph}>R</text></>,
  <><text x="14" y="20" textAnchor="middle" fontSize="22.500" fontWeight="700" {...glyph}>Py</text></>,
  <>{axis}<path d="M1 5h19M1 13h14M1 19h8" stroke={GREY} /><path d="M2 5h18" stroke={CYAN} /><circle cx="22" cy="5" r="3.500" {...b} /><circle cx="16" cy="13" r="2" {...g} /><circle cx="11" cy="19" r="2" {...g} /></>,
  <><path d="M11 13h7M14 4v18M14 4h4M14 22h4" /><path d="M1 10h10v7H1zM18 1h9v6h-9zM18 10h9v6h-9zM18 19h9v6h-9z" {...b} /></>,
  <><path d="M1 2h26v17H13l-7 7v-7H1z" fill={PAPER} stroke={BLUE} /></>,
  <><path d="M4 7V1h12l7 7v19H4V14M16 1v7h7" {...w} /><circle cx="4" cy="11" r="2.700" {...b} /><path d="M10 12h9M10 18h9" stroke={CYAN} /></>,
  <><path d="M7 2h14c0 9 0 16-7 16S7 11 7 2z" {...w} /><path d="M7 4H1c0 6 2 9 7 10M21 4h6c0 6-2 9-7 10" fill="none" /><path d="M7 1h14v3H7zM11 23h6l2 3H8zM12 19h4v4h-4z" {...b} /></>,
  <><path d="M3 1h13l7 7v20H3zM16 1v7h7" {...w} transform="translate(0 -.5)" /><path d="M7 18h3v7H7zM12 21h3v4h-3zM17 15h3v10h-3z" fill={INK} stroke="none" /></>,
  <><path d="M13 5h14v20H1V18" {...w} /><path d="M4 22h20" stroke={GREY} /><text x="17" y="19" textAnchor="middle" fontSize="12" {...glyph}>123</text><Bolt s={0.95} /></>,
  <><path d="M12 27H2V18M12 2h15v10" {...w} /><path d="M12 3h15v4H12z" fill={SILVER} stroke="none" /><path d="M7 19h4v4H7z" {...g} /><path d="M14 15h14v3l-5 5v7h-4v-7l-5-5z" {...w} /><Bolt s={0.95} /></>,
  <><circle cx="14" cy="14" r="12.500" fill="#1b76c0" stroke="#a8a8a8" strokeWidth="1.800" /><path d="M6 8l6-3 4 4-4 5-5 1zM17 14l6-2 1 6-4 4-4-3zM8 18l5 2v4l-4-1z" fill="#35a853" stroke="none" /><path d="M14 1v26M1 14h26M3 8c7 3 15 3 22 0M3 20c7-3 15-3 22 0M9 2c-5 8-5 16 0 24M19 2c5 8 5 16 0 24" stroke="#dadada" strokeWidth="1" fill="none" /></>,
  <><g stroke="#8a2a9b" fill="#faf4fb"><path d="M11 1l3 3L9 9l5 5-5 5 5 5-3 3L1 16v-4zM17 1l10 11v4L17 27l-3-3 5-5-5-5 5-5-5-5z" /><path d="M9 9l5 5 5-5-5-5zM9 19l5-5 5 5-5 5z" /></g></>,
  <><g stroke="#1484dd" fill="#f3f9ff"><path d="M1 2h17l9 11-9 12H1l9-11z" /><path d="M5 7h15M8 25 22 8M14 25l11-13" fill="none" /></g></>,
  <><circle cx="14" cy="12" r="7.500" fill="none" stroke="#2b2b2b" strokeWidth="7" /><path d="M14 4.500a7.500 7.500 0 0 1 7.500 7.500" fill="none" stroke="#f2c811" strokeWidth="8" /><path d="M6.500 14a8 8 0 0 0 5.500 5.500" fill="none" stroke="#f2c811" strokeWidth="5" /><path d="M4 5l3 3M2 12h4M12 21v3" stroke="#f3f2f1" strokeWidth="1" /><path d="M1 27h13" stroke="#e8b900" strokeWidth="2" /><path d="M14 27h13" strokeWidth="2" /></>,
  <><g stroke="none"><path d="M6 1h6v26H0v-8h2v-8h2V6h2z" fill="#e0c60a" /><path d="M15 1h4v5h3v7h2v7h3v7H15z" fill={INK} /></g><path d="M4 8h8M2 14h10M1 20h11" stroke="#9c8800" strokeWidth="1" /><path d="M16 8h5M16 14h7M16 20h10" stroke="#888" strokeWidth="1" /></>,
  <><g stroke="none"><rect x="1" y="2" width="11" height="11" rx="1.500" fill="#4c80b8" /><rect x="15" y="2" width="11" height="11" rx="1.500" fill="#d9614a" /><rect x="1" y="15" width="11" height="11" rx="1.500" fill="#92b0d6" /><rect x="15" y="15" width="11" height="11" rx="1.500" fill="#74a896" /></g></>,
  <><g stroke="none"><path d="M10 4l3-2 4 2 4-2 6 0-4 4 1 4-4 3-3 3-4 0-2-4-4 1z" fill="#0b62f5" /><path d="M3 7l5 2 2 4-3 3 0 8-4 2-2-8z" fill="#b5dff5" /><circle cx="16" cy="10" r="2.800" fill="#fff" /><path d="M19 20h5v4h-4zM17 18h3v2h-3z" fill="#1a66e0" /><path d="M4 1h2v5H4zM4 19h2v4H4zM24 1h2v3h-2z" fill="#3cc97a" /></g><circle cx="16" cy="10" r="2.800" fill="none" stroke="#e03a3a" strokeWidth="1.300" /><path d="M1 10h3M22 17h2" stroke="#e03a3a" /></>,
  <><circle cx="14" cy="12" r="11.500" fill="none" stroke={INK} strokeWidth="1.600" /><circle cx="14" cy="12" r="8.500" fill="none" stroke="#f2c811" strokeWidth="2.200" /><circle cx="14" cy="12" r="5" fill="none" strokeWidth="1.500" stroke={INK} /><path d="M14 0v8" stroke="#f3f2f1" strokeWidth="2" /><path d="M1 27h13" stroke="#e8b900" strokeWidth="2" /><path d="M14 27h13" strokeWidth="2" /></>,
  <><g fill="#252423" stroke="none"><circle cx="5" cy="11" r="1.500" /><circle cx="14" cy="11" r="1.500" /><circle cx="23" cy="11" r="1.500" /></g></>,
];

/* ---------- panes ---------- */

const FiltersPane = styled.aside`
  width: 49px;
  flex: none;
  padding: 19px 0 0 15px;
  background: #fff;
  border-left: 1px solid #b3b0ad;
`;

const FilterGlyph = styled.div`
  margin: 23px 0 0 3px;
`;

const FiltersLabel = styled.div`
  margin: 12px 0 0 -4px;
  writing-mode: vertical-rl;
  font-size: 20.5px;
  font-weight: 600;
  letter-spacing: 0.5px;
  line-height: 26px;
`;

const VizPane = styled.aside`
  width: 271px;
  flex: none;
  background: #f3f2f1;
  border-left: 1px solid #d6d4d2;
`;

const PaneHead = styled.div<{ $pl: number }>`
  height: 58px;
  padding: 0 12px 0 ${(p) => p.$pl}px;
  display: flex;
  align-items: center;
  justify-content: space-between;
  font-size: 21.8px;
  font-weight: 600;
  letter-spacing: -0.38px;
  color: #252423;
`;

const SubHead = styled.div`
  height: 28px;
  padding-left: 12px;
  font-size: 16.5px;
  font-weight: 600;
  line-height: 22px;
  letter-spacing: -0.3px;
`;

const ModeRow = styled.div`
  height: 55px;
  padding-left: 12px;
  display: flex;
  align-items: flex-start;
`;

const ModeButton = styled.div<{ $on?: boolean }>`
  width: 48px;
  height: 48px;
  margin-right: 51px;
  padding: 6px;
  border-radius: 3px;
  background: ${(p) => (p.$on ? "#d2d0ce" : "transparent")};
`;

const Gallery = styled.div`
  padding: 17px 0 0 16px;
  height: 353px;
  display: grid;
  grid-template-columns: repeat(6, 42px);
  grid-auto-rows: 42px;
  border-bottom: 1px solid #d6d4d2;
`;

const FieldLabel = styled.div`
  height: 45px;
  padding-left: 18px;
  font-size: 17.2px;
  line-height: 50px;
  letter-spacing: -0.1px;
`;

const DropBox = styled.div`
  width: 255px;
  height: 42px;
  margin-left: 6px;
  padding-left: 15px;
  background: #fff;
  border: 1px dashed #bdbbb9;
  border-radius: 3px;
  font-size: 17.2px;
  line-height: 38px;
  letter-spacing: -0.1px;
  white-space: nowrap;
`;

const DrillHead = styled.div`
  height: 53px;
  padding: 0 0 0 18px;
  font-size: 17px;
  font-weight: 600;
  line-height: 54px;
  letter-spacing: -0.3px;
  color: #4f4e4d;
`;

const ToggleRow = styled.div<{ $h: number }>`
  height: ${(p) => p.$h}px;
  padding: 0 33px 0 18px;
  display: flex;
  align-items: flex-start;
  justify-content: space-between;
  font-size: 17.2px;
  line-height: 24px;
  letter-spacing: -0.18px;
`;

const Toggle = styled.div<{ $on?: boolean }>`
  width: 48px;
  height: 24px;
  padding: 0 6px;
  display: flex;
  flex-direction: ${(p) => (p.$on ? "row" : "row-reverse")};
  align-items: center;
  justify-content: space-between;
  border-radius: 12px;
  border: 1px solid ${(p) => (p.$on ? TEAL : "#8a8886")};
  background: ${(p) => (p.$on ? TEAL : "#fff")};
  color: ${(p) => (p.$on ? "#fff" : "#605e5c")};
  font-size: 13.5px;

  &::after {
    content: "";
    width: 12px;
    height: 12px;
    border-radius: 50%;
    background: ${(p) => (p.$on ? "#fff" : "#605e5c")};
  }
`;

const DataPane = styled.aside`
  width: 270px;
  flex: none;
  background: #f3f2f1;
  border-left: 1px solid #d6d4d2;
`;

const DataSearch = styled.div`
  width: 258px;
  height: 39px;
  margin: 10px 0 0 6px;
  padding: 2px 11px 0;
  display: flex;
  align-items: center;
  gap: 10px;
  border: 1px solid #797775;
  border-radius: 3px;
  font-size: 19.8px;
  letter-spacing: -0.1px;
  color: #484644;

  & > svg { margin-bottom: 2px; }
`;

const FieldList = styled.div`
  padding: 14px 0 0 24px;
`;

const FieldRow = styled.div`
  height: 36px;
  display: flex;
  align-items: center;
  font-size: 17.2px;
  letter-spacing: -0.15px;
  color: #323130;
`;

const FieldIcon = styled.div`
  margin: 0 9px 0 10px;
`;

const sources: [string, boolean?][] = [
  ["Affiliate"], ["Bing", true], ["BTL"], ["Cold"], ["Criteo"], ["Facebook", true], ["Google", true], ["IVR"], ["Organic"],
];
const months: [string, boolean?][] = [
  ["Select all"], ["January"], ["February", true], ["March", true], ["April"], ["May"], ["June"], ["July"], ["August"],
];
const tabs: [string, number][] = [
  ["File", 87], ["Home", 104], ["Insert", 100], ["Modeling", 136], ["View", 92], ["Optimize", 131], ["Help", 60],
];
const fields = ["Date", "Leads", "Paid/Unpaid", "Premium", "Source", "Source2", "Spend", "State", "State1"];

function TopBar() {
  return (
    <TitleBar>
      <TitleIcon $ml={22} $mt={6}>
        <svg width="22" height="22" viewBox="0 0 22 22" fill="none" stroke="#e6e6e6" strokeWidth="1.600">
          <path d="M1 1h20v20H4l-3-3zM5 1v9h12V1M6 21v-6h10v6M10 16v5" />
        </svg>
      </TitleIcon>
      <TitleIcon $ml={23} $mt={6}>
        <svg width="20" height="22" viewBox="0 0 20 22" fill="none" stroke="#e6e6e6" strokeWidth="1.500">
          <path d="M1 0v9h9M1 9C5 3 10 0 15 1.500c5 2 5 8 1 12L8 21" />
        </svg>
      </TitleIcon>
      <TitleIcon $ml={24} $mt={6} $dim>
        <svg width="20" height="22" viewBox="0 0 20 22" fill="none" stroke="#e6e6e6" strokeWidth="1.500">
          <path d="M19 0v9h-9M19 9C15 3 10 0 5 1.500c-5 2-5 8-1 12L12 21" />
        </svg>
      </TitleIcon>
      <DocName>D2C Conversion Report Till Mar'25 • Last saved: Today at 9:51 AM</DocName>
      <TitleIcon $ml={0} $mt={14}>
        <svg width="13" height="7" viewBox="0 0 13 7"><path d="M0 0h13L6.500 7z" fill="#fff" /></svg>
      </TitleIcon>
      <TopSearch>
        <TitleIcon $ml={0} $mt={4}><Magnifier size={24} /></TitleIcon>
        <TopSearchText>Search</TopSearchText>
      </TopSearch>
      <UserName>Jaichandran B</UserName>
      <TitleIcon $ml={0} $mt={1}>
        <svg width="30" height="30" viewBox="0 0 30 30" fill="none" stroke="#111" strokeWidth="2">
          <circle cx="15" cy="15" r="15" fill="#f5f3f1" stroke="none" />
          <circle cx="15" cy="8.500" r="4.500" />
          <path d="M7.500 16h15c1.500 0 1.500 2 1 3.500C22 24 19 25.500 15 25.500S8 24 6.500 19.500c-.500-1.500-.500-3.500 1-3.500z" />
        </svg>
      </TitleIcon>
      <TitleIcon $ml={47} $mt={16}>
        <svg width="16" height="2"><path d="M0 1h16" stroke="#fff" strokeWidth="1.500" /></svg>
      </TitleIcon>
      <TitleIcon $ml={50} $mt={10}>
        <svg width="16" height="16" fill="none"><rect x=".8" y=".8" width="14.400" height="14.400" rx="1.500" stroke="#fff" strokeWidth="1.500" /></svg>
      </TitleIcon>
      <TitleIcon $ml={50} $mt={10}>
        <svg width="16" height="16" fill="none"><path d="M.5.5l15 15M15.500.500l-15 15" stroke="#fff" strokeWidth="1.500" /></svg>
      </TitleIcon>
    </TitleBar>
  );
}

function RibbonBar() {
  return (
    <Ribbon>
      <TabRow>
        {tabs.map(([t, width]) => (
          <Tab key={t} $w={width} $active={t === "Home"}>
            <TabLabel $active={t === "Home"}>{t}</TabLabel>
          </Tab>
        ))}
        <ShareButton>
          <svg width="24" height="22" viewBox="0 0 24 22" fill="none" stroke="#fff" strokeWidth="1.600">
            <path d="M5 6H1v15h17v-5M15 1l8 7-8 7v-4c-5 0-8 1-10 5 0-6 3-11 10-11z" />
          </svg>
          Share
          <Chevron color="#fff" />
        </ShareButton>
      </TabRow>
      <ToolRow>
        <Tool $ml={26}>{I.paste}</Tool>
        <Tool $ml={6} $w={15}><Chevron color="#c8c6c4" /></Tool>
        <Tool $ml={22}>{I.brush}</Tool>
        <Divider $ml={21} />
        <Tool $ml={24}>{I.getData}</Tool>
        <ToolLabel $ml={13} $w={80}>Get data</ToolLabel>
        <Tool $ml={9} $w={15}><Chevron /></Tool>
        <Tool $ml={23}>{I.excel}</Tool>
        <Tool $ml={31} $w={25}>{I.lake}</Tool>
        <Tool $ml={9} $w={15}><Chevron /></Tool>
        <Tool $ml={24}>{I.sql}</Tool>
        <Tool $ml={26} $w={30}>{I.enter}</Tool>
        <Tool $ml={30} $w={29}>{I.verse}</Tool>
        <Tool $ml={33}>{I.recent}</Tool>
        <Tool $ml={4} $w={15}><Chevron /></Tool>
        <Divider $ml={13} />
        <Tool $ml={22} $w={30}>{I.transform}</Tool>
        <Tool $ml={6} $w={15}><Chevron /></Tool>
        <Tool $ml={23}>{I.refresh}</Tool>
        <Divider $ml={19} />
        <Tool $ml={23}>{I.newVisual}</Tool>
        <ToolLabel $ml={14} $w={100}>New visual</ToolLabel>
        <Tool $ml={31} $w={30}>{I.textBox}</Tool>
        <Tool $ml={32}>{I.moreVisual}</Tool>
        <Tool $ml={6} $w={15}><Chevron /></Tool>
        <Divider $ml={11} />
        <Tool $ml={25} $w={22}>{I.calc}</Tool>
        <Tool $ml={33}>{I.quick}</Tool>
        <Divider $ml={22} />
        <Tool $ml={25}>{I.sensitivity}</Tool>
        <ToolLabel $ml={13} $w={95} $off>Sensitivity</ToolLabel>
        <Tool $ml={8} $w={15}><Chevron color="#c8c6c4" /></Tool>
        <Divider $ml={12} />
        <Tool $ml={23}>{I.publish}</Tool>
        <ToolLabel $ml={14} $w={68}>Publish</ToolLabel>
        <Divider $ml={23} />
        <Tool $ml={21}>{I.copilot}</Tool>
        <ToolLabel $ml={16} $w={68}>Copilot</ToolLabel>
        <Divider $ml={23} />
        <Collapse><Chevron w={14} h={8} sw={2.800} /></Collapse>
      </ToolRow>
    </Ribbon>
  );
}

function ReportPage() {
  return (
    <Page>
      <PageHead>
        <PageTitle>Channel and State wise Analysis</PageTitle>
        <SameMonth>
          <SameMonthHead>SameMonth<Chevron w={10} h={6} color="#666" sw={1.300} /></SameMonthHead>
          <SameMonthBox>All<Chevron w={12} h={7} color="#444" sw={1.400} /></SameMonthBox>
        </SameMonth>
      </PageHead>
      <Upper>
        <SideColumn>
          <PaidSlicer>
            <SlicerHead>Paid/Unpaid<Eraser /></SlicerHead>
            <PaidButtons>
              <Chip $h={20}>Paid</Chip>
              <Chip $h={20}>Unpaid</Chip>
            </PaidButtons>
          </PaidSlicer>
          <SourceSlicer>
            <SlicerHead $blue>Source<Eraser color="#9cc4ea" /></SlicerHead>
            <SourceBody>
              <SourceList>
                {sources.map(([s, on]) => <Chip key={s} $h={20} $on={on}>{s}</Chip>)}
              </SourceList>
              <SourceScroll>
                <svg width="9" height="7"><path d="M0 7h9L4.500 0z" fill="#7d7d7d" /></svg>
                <Thumb />
                <svg width="9" height="7"><path d="M0 0h9L4.500 7z" fill="#7d7d7d" /></svg>
              </SourceScroll>
            </SourceBody>
          </SourceSlicer>
        </SideColumn>
        <MainColumn>
          <FilterBand>
            <TileSlicer $w={83}>
              <TileTitle>Year</TileTitle>
              <TileGrid $n={1}>
                <Tile $left>Select all</Tile>
                <Tile $left>2024</Tile>
                <Tile $left $on>2025</Tile>
              </TileGrid>
            </TileSlicer>
            <TileSlicer $w={256} $ml={9}>
              <TileTitle>Month</TileTitle>
              <TileGrid $n={3}>
                {months.map(([m, on]) => <Tile key={m} $on={on}>{m}</Tile>)}
              </TileGrid>
            </TileSlicer>
            <TileScroll />
            <YearMatrix />
            <StateSlicer>
              <SlicerHead $blue>State<Eraser color="#9cc4ea" /></SlicerHead>
              <StateGrid>
                {["AP & TL", "KARNATAKA", "KERALA", "North", "OTHERS", "TN & PN"].map((s) => (
                  <Chip key={s} $h={17} $r={5}>{s}</Chip>
                ))}
              </StateGrid>
            </StateSlicer>
          </FilterBand>
          <TableBand>
            <MatrixVisual
              cols={[151, 42.5, 49.5, 30.5, 42.3, 42.5, 42.8, 36.2, 42.7]}
              headHeight={41} rowHeight={16.25} field="Source2" rows={sourceRows} sorted mt={20}
            />
            <MatrixVisual
              cols={[152, 49.4, 51.8, 45, 50.1, 46.6, 54.3, 44, 45.3]}
              headHeight={57} field="Source2" rows={sourceCompRows} comp sorted ml={13.200} boldLs={-0.1} plainLs={-0.05}
            />
          </TableBand>
        </MainColumn>
      </Upper>
      <Lower>
        <MatrixVisual
          cols={[199.4, 35.8, 48.9, 31, 42.7, 36.2, 49.2, 30.300, 43.1]}
          headHeight={41} field="State" rows={stateRows} mt={1} boldLs={0.15} plainLs={0.2}
        />
        <MatrixVisual
          cols={[202, 45.1, 60.9, 43.1, 44.6, 48.3, 50.7, 43, 47.5]}
          headHeight={56.500} field="State" rows={stateCompRows} comp ml={21.400} boldLs={0.33} plainLs={0.42}
        />
      </Lower>
    </Page>
  );
}

export default function App() {
  return (
    <Shell>
      <Global />
      <TopBar />
      <RibbonBar />
      <Workspace>
        <Rail>
          <RailItem>
            <svg width="22" height="22" viewBox="0 0 22 22" fill="none" stroke="#111" strokeWidth="1.500">
              <path d="M1 0v20.500h21M4.500 4h3.500v13H4.500zM10.500 8h3.500v9h-3.500zM16.500 2h3.500v15h-3.500z" />
            </svg>
          </RailItem>
          <RailItem>
            <svg width="24" height="23" viewBox="0 0 24 23" fill="none" stroke="#797775" strokeWidth="1.500">
              <path d="M1 1h22v21H1zM1 5h22M1 10.500h22M1 16.500h22M8.500 5v17M15.500 5v17M1 2.500h22" />
            </svg>
          </RailItem>
          <RailItem>
            <svg width="28" height="27" viewBox="0 0 28 27" fill="none" stroke="#797775" strokeWidth="1.500">
              <path d="M1 9h10v10H1zM1 12h10M16 1h11v10H16zM16 4h11M16 16h11v10H16zM16 19h11M7 9V5h9M7 19v4h9" />
            </svg>
          </RailItem>
          <RailItem>
            <svg width="26" height="26" viewBox="0 0 26 26" fill="none" stroke="#797775" strokeWidth="1.300">
              <path d="M7 14V1h9l5 5v10M15 1v6h6M24 9v9c0 3-1 4-4 5" />
              <text x="-.5" y="24.500" fontFamily={UI} fontSize="10.500" fontWeight="700" fill="#797775" stroke="none">DAX</text>
            </svg>
          </RailItem>
        </Rail>
        <CanvasArea>
          <ReportPage />
          <PageScroll />
        </CanvasArea>
        <FiltersPane>
          <Double left />
          <FilterGlyph>
            <svg width="17" height="19" viewBox="0 0 17 19" fill="none" stroke="#252423" strokeWidth="1.700">
              <path d="M16 1v17l-8-6H1V8h7z" />
            </svg>
          </FilterGlyph>
          <FiltersLabel>Filters</FiltersLabel>
        </FiltersPane>
        <VizPane>
          <PaneHead $pl={12}>Visualizations<Double /></PaneHead>
          <SubHead>Build visual</SubHead>
          <ModeRow>
            <ModeButton $on>
              <svg width="36" height="36" viewBox="0 0 36 36" fill="none" stroke="#252423" strokeWidth="1.800">
                <path d="M0 1h29" />
                <path d="M1 8h34v11H1zM1 24h34v11H1z" fill={TEAL} strokeDasharray="3 1.600" />
              </svg>
            </ModeButton>
            <ModeButton>
              <svg width="36" height="36" viewBox="0 0 36 36" fill="none" stroke="#252423" strokeWidth="1.600">
                <path d="M7 35H1V1h15l10 10v3M16 1v10h10" />
                <path d="M8 34c5 0 4-6 9-7 4-1 6 4 3 6.500-3 2.500-9 2-12 .500zM18 26 34 13.500c2-1 2 .500 1 1.500L22 30" />
              </svg>
            </ModeButton>
          </ModeRow>
          <svg width="270" height="12" viewBox="0 0 270 12" fill="none" stroke="#8a8886" strokeWidth="1.200">
            <path d="M0 11.500h25L36 .700l11 10.800h223" />
          </svg>
          <Gallery>
            {gallery.map((icon, i) => (
              <svg key={i} width="28" height="28" viewBox="0 0 28 28" fill="none" stroke={INK} strokeWidth="1.500">
                {icon}
              </svg>
            ))}
          </Gallery>
          <FieldLabel>Values</FieldLabel>
          <DropBox>Add data fields here</DropBox>
          <DrillHead>Drill through</DrillHead>
          <ToggleRow $h={40}>Cross-report<Toggle>Off</Toggle></ToggleRow>
          <ToggleRow $h={39}>Keep all filters<Toggle $on>On</Toggle></ToggleRow>
          <DropBox>Add drill-through fields here</DropBox>
        </VizPane>
        <DataPane>
          <PaneHead $pl={12}>Data<Double /></PaneHead>
          <DataSearch><Magnifier size={21} color="#605e5c" />Search</DataSearch>
          <FieldList>
            {fields.map((f) => (
              <FieldRow key={f}>
                <svg width="10" height="18" viewBox="0 0 10 18" fill="none" stroke="#484644" strokeWidth="1.400">
                  <path d="M1 1l8 8-8 8" />
                </svg>
                <FieldIcon>
                  <svg width="18" height="18" viewBox="0 0 18 18" fill="none" stroke="#252423" strokeWidth="1.500">
                    <rect x=".8" y=".8" width="16.400" height="16.400" rx="3.500" />
                    <path d="M1 5.500h16M1 12.500h16M5.500 1v16M12.500 1v16" />
                  </svg>
                </FieldIcon>
                {f}
              </FieldRow>
            ))}
          </FieldList>
        </DataPane>
      </Workspace>
    </Shell>
  );
}
